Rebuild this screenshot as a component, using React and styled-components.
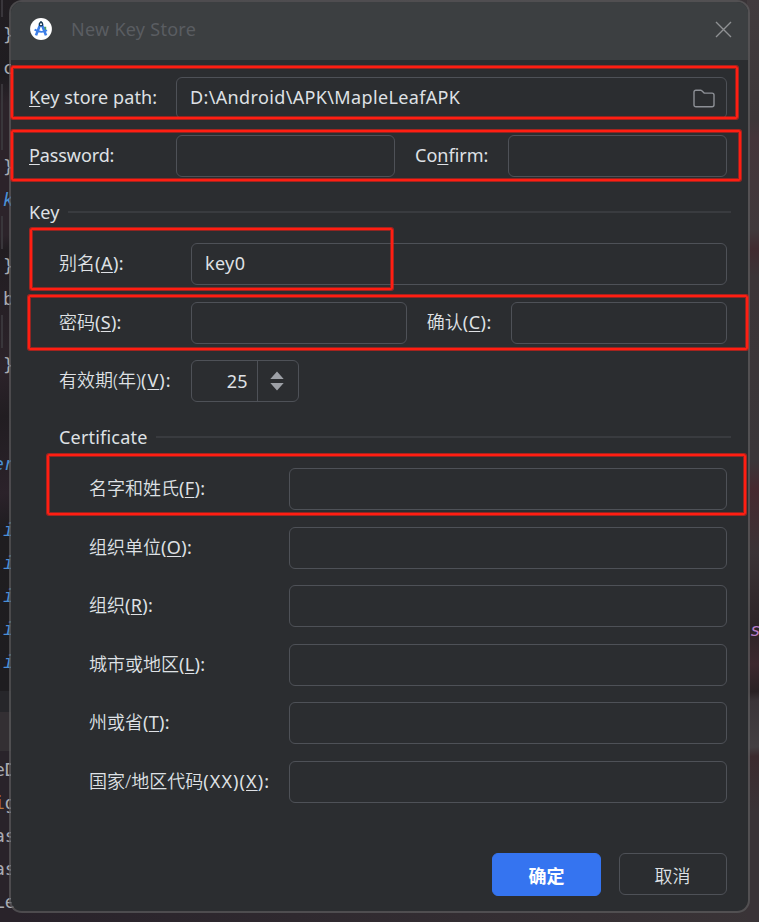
import React from 'react';
import styled, { createGlobalStyle, css } from 'styled-components';

const GlobalStyle = createGlobalStyle`
  * { box-sizing: border-box; }
  body { margin: 0; overflow: hidden; background: #201e22; }
`;

const Screen = styled.div`
  position: relative;
  width: 759px;
  height: 922px;
  overflow: hidden;
  display: flex;
  justify-content: space-between;
  background: linear-gradient(90deg, #28222a, #3a3437);
  font-family: 'Noto Sans', 'Noto Sans CJK SC', sans-serif;
  font-size: 18px;
  color: #dfe1e5;
`;

const Gutter = styled.div`
  width: 20px;
  overflow: hidden;
  display: flex;
  flex-direction: column;
  font-family: 'DejaVu Sans Mono', monospace;
  font-size: 18px;
`;

const CodePane = styled.div`
  height: 691px;
  padding-top: 18px;
  background:
    linear-gradient(#39363b, #39363b) 1px 0 / 2px 17px no-repeat,
    linear-gradient(#39363b, #39363b) 1px 84px / 2px 66px no-repeat,
    linear-gradient(#39363b, #39363b) 1px 216px / 2px 33px no-repeat,
    linear-gradient(#39363b, #39363b) 1px 315px / 2px 33px no-repeat,
    linear-gradient(165deg, #221e22 0, #1e1c20 11%, #2c232a 15%, #2c232a 34%, #211d21 36%, #2c232a 53%, #211d21 60%, #2b222a 71%, #1f1d20 76%, #1e1d20 100%);
`;

const Divider = styled.div`
  height: 60px;
  background: linear-gradient(#26262a 0 21px, #332f33 21px);
`;

const ConsolePane = styled.div`
  height: 171px;
  padding-top: 2px;
  background: #29232a;
`;

const tones = { plain: '#a9abb2', blue: '#4a90d6', orange: '#b5763c', purple: '#b57cc6' };

const CodeLine = styled.div`
  height: 33px;
  line-height: 33px;
  white-space: pre;
  margin-left: ${(p) => p.$shift ?? 3}px;
  color: ${(p) => tones[p.$tone || 'plain']};
  font-style: ${(p) => (p.$italic ? 'italic' : 'normal')};
`;

const RightEdge = styled.div`
  width: 12px;
  padding-top: 613px;
  font-family: 'DejaVu Sans Mono', monospace;
  font-size: 18px;
  background: linear-gradient(175deg, #423b3e 0, #3d3638 13%, #45353a 15%, #41393c 25%, #412b30 27%, #3c3437 30%,
    #3b3639 50%, #46292f 53%, #3b3336 60%, #2d2326 68%, #3d282e 72%, #2a2124 75%, #3b3438 76%, #443f42 81%, #3c2a2e 82%, #3a3337 88%, #3a3337 100%);
`;

const Dialog = styled.section`
  position: absolute;
  left: 9px;
  top: 0;
  width: 741px;
  height: 913px;
  display: flex;
  flex-direction: column;
  overflow: hidden;
  border: 2px solid rgba(92, 92, 94, 0.7);
  border-radius: 13px;
  background: #2b2d30;
  background-clip: padding-box;
`;

const TitleBar = styled.header`
  flex: none;
  height: 58px;
  display: flex;
  align-items: center;
  padding: 0 16px 4px 19px;
  background: #3c3f41;
`;

const Title = styled.h1`
  flex: 1;
  margin: 0 0 0 19px;
  font-size: 18px;
  font-weight: 400;
  letter-spacing: 0.27px;
  color: #5a5d61;
`;

const IconButton = styled.button`
  display: flex;
  padding: 0;
  border: 0;
  background: none;
`;

const Form = styled.form`
  padding: 16.5px 21.5px 0 18px;
`;

const FormRow = styled.div`
  display: flex;
  align-items: center;
  height: 42px;
  margin-top: ${(p) => p.$gap ?? 16.5}px;
`;

const indents = { 0: [0, 147], 1: [30, 132], 2: [60, 199.5] };

const Label = styled.label`
  flex: none;
  width: ${(p) => indents[p.$level || 0][1]}px;
  margin-left: ${(p) => indents[p.$level || 0][0]}px;
  padding-bottom: 2px;
  white-space: nowrap;
  line-height: 26px;
  letter-spacing: ${(p) => p.$track || 0}px;

  ${(p) =>
    p.$inline &&
    css`
      width: ${p.$inline}px;
      margin-left: 20px;
    `}
`;

const Mnemonic = styled.span`
  text-decoration: underline;
  text-decoration-thickness: 1px;
  text-underline-offset: 2px;
  text-decoration-skip-ink: none;
`;

const Latin = styled.span`
  letter-spacing: ${(p) => p.$track}px;
`;

const Field = styled.div`
  flex: 1;
  min-width: 0;
  height: 42px;
  display: flex;
  align-items: center;
  justify-content: space-between;
  padding: 0 11px 2px 13px;
  border: 1px solid #4e5157;
  border-radius: 6px;
  letter-spacing: 0.36px;

  > svg {
    margin-top: 3px;
  }
`;

const Spinner = styled(Field)`
  flex: none;
  width: 108px;
  padding: 0;
`;

const SpinnerValue = styled.span`
  width: 66px;
  height: 100%;
  padding-right: 9px;
  line-height: 41px;
  text-align: right;
  border-right: 1px solid #4e5157;
`;

const SpinnerArrows = styled.span`
  flex: 1;
  display: flex;
  justify-content: center;
  padding-right: 2px;
`;

const SectionTitle = styled.h2`
  display: flex;
  align-items: center;
  gap: 8px;
  height: 26px;
  margin: ${(p) => p.$top}px -4.5px 0 ${(p) => p.$indent || 0}px;
  font-size: 18px;
  font-weight: 400;
  letter-spacing: 0.2px;

  &::after {
    content: '';
    flex: 1;
    height: 2px;
    background: #393b3f;
  }
`;

const Actions = styled.footer`
  display: flex;
  justify-content: flex-end;
  align-items: flex-start;
  gap: 17.5px;
  height: 43px;
  margin-top: 50.5px;
`;

const Button = styled.button`
  width: ${(p) => (p.$primary ? 109 : 108)}px;
  height: ${(p) => (p.$primary ? 43 : 42)}px;
  padding: ${(p) => (p.$primary ? 0 : 1)}px 0 0;
  font: inherit;
  font-weight: ${(p) => (p.$primary ? 700 : 350)};
  color: ${(p) => (p.$primary ? '#fff' : '#dfe1e5')};
  background: ${(p) => (p.$primary ? '#3574f0' : 'transparent')};
  border: 1px solid ${(p) => (p.$primary ? '#3574f0' : '#4e5157')};
  border-radius: 6px;
`;

const Cjk = styled.span`
  font-weight: 350;
  letter-spacing: 0;
`;

const Callout = styled.div`
  position: absolute;
  left: ${(p) => p.$x}px;
  top: ${(p) => p.$y}px;
  width: ${(p) => p.$w}px;
  height: ${(p) => p.$h}px;
  border: 2px solid #ff1e12;
  border-radius: 2px;
  box-shadow: 0 0 0 1px rgba(245, 30, 20, 0.6), inset 0 0 0 1px rgba(245, 30, 20, 0.5);
  pointer-events: none;
`;

const StudioIcon = () => (
  <svg width="22" height="22" viewBox="0 0 22 22">
    <circle cx="11" cy="11" r="10.9" fill="#fff" />
    <path d="M13.6 8.8h2.6v4.4h-2.6z" fill="#4fa55b" />
    <path d="M10.3 6.2 6 17.4M11.7 6.2 16 17.4" stroke="#3d7fe8" strokeWidth="2.6" fill="none" />
    <path d="M4.6 11.6Q11 15.8 17 12.2" stroke="#3d7fe8" strokeWidth="1.9" fill="none" />
    <circle cx="11" cy="6.2" r="1.7" fill="#fff" stroke="#173a55" strokeWidth="1.3" />
    <path d="M11 2.9v2" stroke="#173a55" strokeWidth="1.3" />
  </svg>
);

const CloseIcon = () => (
  <svg width="17" height="17" viewBox="0 0 17 17" stroke="#8f9193" strokeWidth="1.4" fill="none">
    <path d="M1 1 16 16M16 1 1 16" />
  </svg>
);

const FolderIcon = () => (
  <svg width="22" height="19" viewBox="0 0 22 19" fill="none" stroke="#8d9096" strokeWidth="1.4">
    <path d="M1 15.7V3.2Q1 1.2 3 1.2H7.6Q8.3 1.2 8.8 1.7L11.2 4.1H19Q21 4.1 21 6.1V15.7Q21 17.7 19 17.7H3Q1 17.7 1 15.7Z" />
  </svg>
);

const ArrowsIcon = () => (
  <svg width="14" height="20" viewBox="0 0 14 20" fill="#9da0a6">
    <path d="M7 .5 13.7 8H.3zM7 19.5 13.7 12H.3z" />
  </svg>
);

const codeLines = [
  ['}'], ['c'], [''], [''], ['}'], ['k', 'blue', true], [''], ['}'], ['b'], [''], ['}'], [''], [''],
  ['er', 'blue', true, -7], [''], ['i', 'blue', true], ['i', 'blue', true], ['i', 'blue', true],
  ['i', 'blue', true], ['i', 'blue', true],
];

const consoleLines = [['e', 'D'], ['i', 'g', 'orange'], ['a', 's'], ['a', 's'], ['L', 'e']];

const certificateRows = [
  ['名字和姓氏', 'F'],
  ['组织单位', 'O'],
  ['组织', 'R'],
  ['城市或地区', 'L'],
  ['州或省', 'T'],
  ['国家/地区代码', 'X', '(XX)'],
];

const callouts = [
  [11, 66, 727, 53],
  [11, 130, 730, 51],
  [30, 228, 363, 62],
  [28, 295, 720, 55],
  [47, 454, 699, 61],
];

const CodeToken = styled.span`
  color: ${(p) => tones[p.$tone || 'plain']};
`;

const CjkLabel = ({ text, code = '', letter, track = 0.5, ...rest }) => (
  <Label {...rest}>
    <Cjk>{text}</Cjk>
    <Latin $track={track}>
      {code}(<Mnemonic>{letter}</Mnemonic>):
    </Latin>
  </Label>
);

export default function App() {
  return (
    <Screen>
      <GlobalStyle />
      <Gutter>
        <CodePane>
          {codeLines.map(([text, tone, italic, shift], i) => (
            <CodeLine key={i} $tone={tone} $italic={italic} $shift={shift}>{text}</CodeLine>
          ))}
        </CodePane>
        <Divider />
        <ConsolePane>
          {consoleLines.map(([first, second, tone], i) => (
            <CodeLine key={i} $shift={-6}>
              <CodeToken $tone={tone}>{first}</CodeToken>
              {second}
            </CodeLine>
          ))}
        </ConsolePane>
      </Gutter>
      <RightEdge>
        <CodeLine $tone="purple" $italic>s</CodeLine>
      </RightEdge>

      <Dialog>
        <TitleBar>
          <StudioIcon />
          <Title>New Key Store</Title>
          <IconButton type="button" aria-label="Close"><CloseIcon /></IconButton>
        </TitleBar>
        <Form>
          <FormRow $gap={0}>
            <Label $track={0.13}><Mnemonic>K</Mnemonic>ey store path:</Label>
            <Field>D:\Android\APK\MapleLeafAPK<FolderIcon /></Field>
          </FormRow>
          <FormRow $gap={16.5}>
            <Label $track={-0.1}><Mnemonic>P</Mnemonic>assword:</Label>
            <Field />
            <Label $inline={92.5}>Co<Mnemonic>n</Mnemonic>firm:</Label>
            <Field />
          </FormRow>

          <SectionTitle $top={22}>Key</SectionTitle>
          <FormRow $gap={18}>
            <CjkLabel $level={1} text="别名" letter="A" />
            <Field>key0</Field>
          </FormRow>
          <FormRow $gap={17}>
            <CjkLabel $level={1} text="密码" letter="S" track={0.3} />
            <Field />
            <CjkLabel $inline={84} text="确认" letter="C" />
            <Field />
          </FormRow>
          <FormRow $gap={16}>
            <CjkLabel $level={1} text="有效期(年)" letter="V" track={1} />
            <Spinner>
              <SpinnerValue>25</SpinnerValue>
              <SpinnerArrows><ArrowsIcon /></SpinnerArrows>
            </Spinner>
          </FormRow>

          <SectionTitle $top={22} $indent={30}>Certificate</SectionTitle>
          {certificateRows.map(([text, letter, code], i) => (
            <FormRow key={text} $gap={i === 0 ? 18 : 16.5}>
              <CjkLabel $level={2} text={text} letter={letter} code={code} track={code ? 1.1 : 0.35} />
              <Field />
            </FormRow>
          ))}

          <Actions>
            <Button type="button" $primary>确定</Button>
            <Button type="button">取消</Button>
          </Actions>
        </Form>
      </Dialog>

      {callouts.map(([x, y, w, h]) => (
        <Callout key={y} $x={x} $y={y} $w={w} $h={h} />
      ))}
    </Screen>
  );
}
